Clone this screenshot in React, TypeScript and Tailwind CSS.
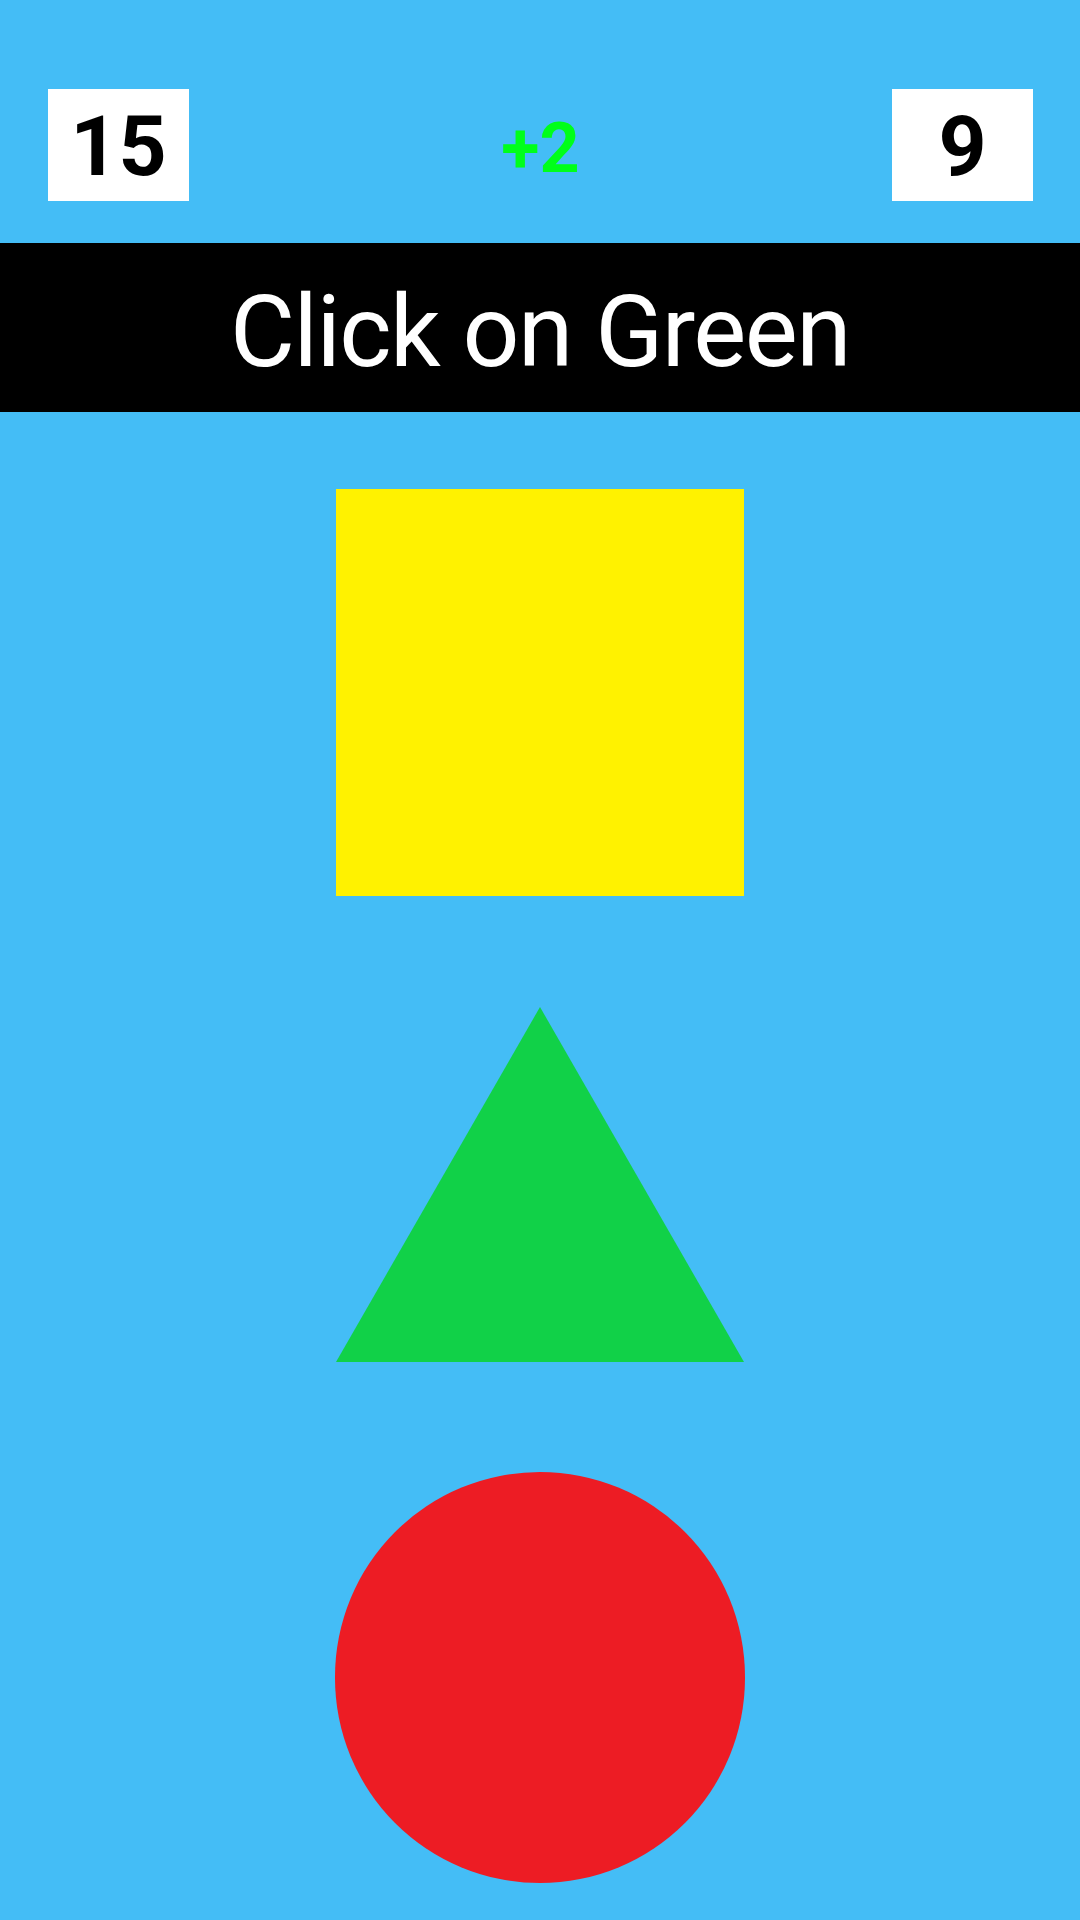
import React from "react";

export default function App() {
  return (
    <div
      className="w-[1080px] h-[1920px] bg-[#44bdf6] flex flex-col overflow-hidden"
      style={{ fontFamily: "Roboto, 'Liberation Sans', sans-serif" }}
    >
      <div className="h-[243px] flex items-start justify-between pt-[89px] pl-[48px] pr-[47px]">
        <div className="w-[141px] h-[112px] bg-white flex items-center justify-center">
          <span className="text-[84px] font-bold leading-none text-black pt-[4px]">15</span>
        </div>
        <div className="h-[112px] flex items-center justify-center">
          <span className="text-[70px] font-bold leading-none text-[#00ff1a] pt-[6px]">+2</span>
        </div>
        <div className="w-[141px] h-[112px] bg-white flex items-center justify-center">
          <span className="text-[84px] font-bold leading-none text-black pt-[4px]">9</span>
        </div>
      </div>
      <div className="h-[169px] bg-black flex items-center justify-center">
        <span className="text-[100px] leading-none text-white tracking-[-1.5px] pt-[8px]">Click on Green</span>
      </div>
      <div className="flex flex-col items-center pt-[77px]">
        <div className="w-[408px] h-[407px] bg-[#fff200]" />
        <svg className="mt-[111px]" width="408" height="355" viewBox="0 0 408 355">
          <polygon points="204,0 408,355 0,355" fill="#11d148" />
        </svg>
        <div className="mt-[110px] w-[410px] h-[411px] rounded-full bg-[#ed1c24]" />
      </div>
    </div>
  );
}
